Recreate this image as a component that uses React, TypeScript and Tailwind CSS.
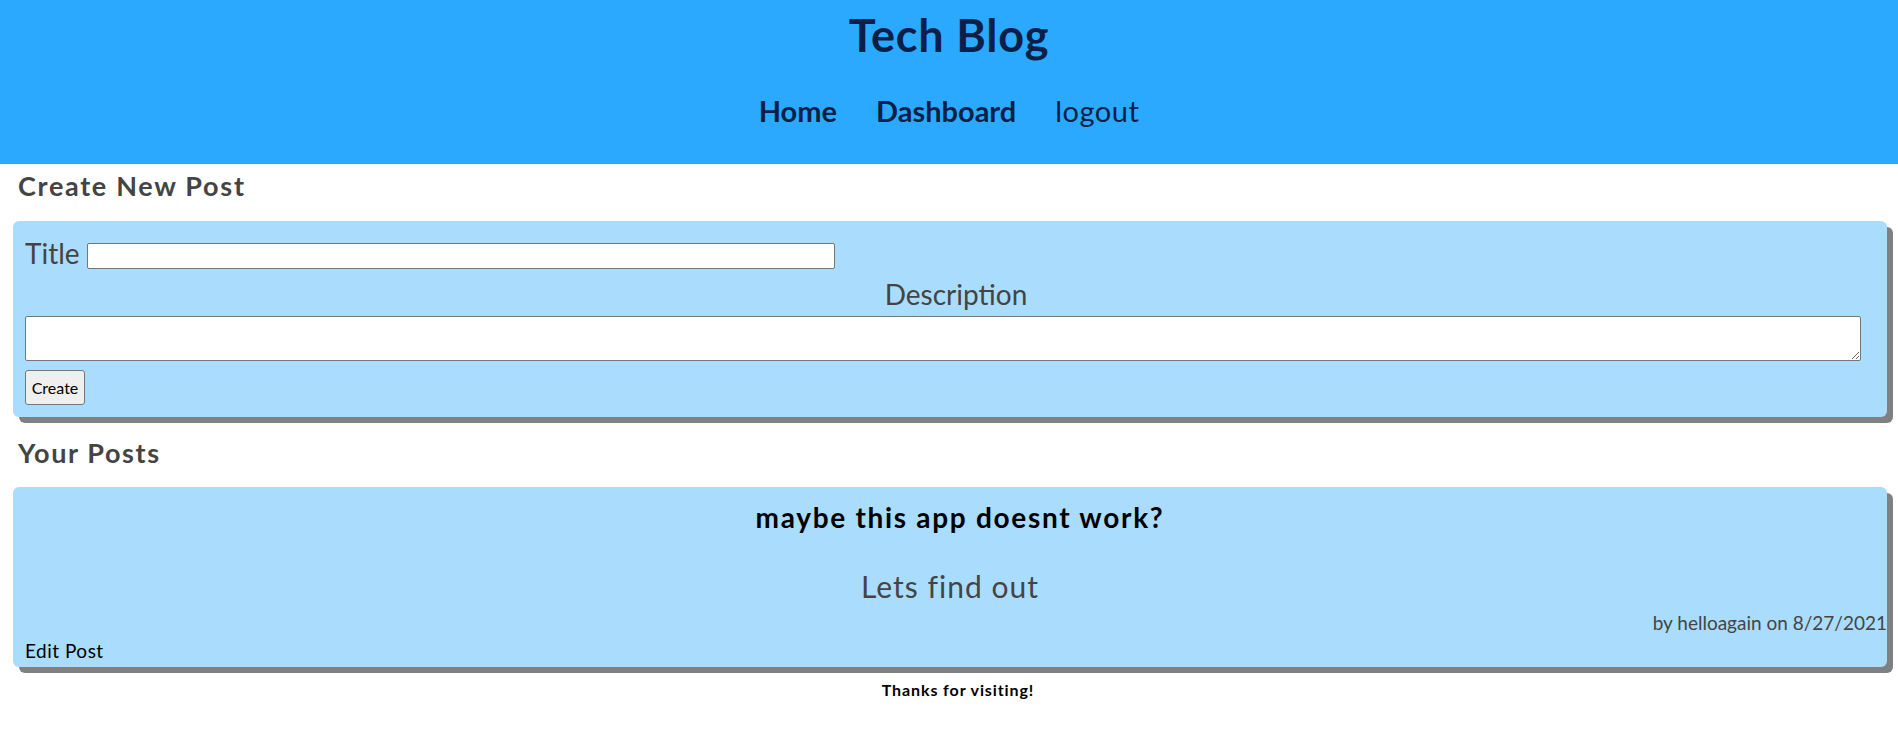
import React from "react";

export default function App() {
  return (
    <div className="min-h-[742px] bg-white font-['Lato','Noto_Sans',sans-serif] text-[#444444]">
      <header className="h-[164px] bg-[#2aa9ff] pt-[5px] flex flex-col items-center text-[#0b1f47]">
        <h1 className="h-[60px] text-[45px] leading-[60px] font-bold tracking-[0.8px]">Tech Blog</h1>
        <nav className="mt-[26px] flex gap-[39px] text-[29px] leading-[40px]">
          <a className="font-bold">Home</a>
          <a className="font-bold">Dashboard</a>
          <a className="font-normal tracking-[0.5px]">logout</a>
        </nav>
      </header>

      <main className="pl-[13px] pr-[11px]">
        <h2 className="pt-[4px] mb-[17px] pl-[5px] text-[27px] leading-[36px] font-bold tracking-[1.7px]">
          Create New Post
        </h2>

        <form className="rounded-md bg-[#aadcfe] pl-[12px] pt-[15px] pb-[12px] shadow-[6px_6px_0_#808080]">
          <div className="flex items-start">
            <label className="text-[28px] leading-[34px]">Title</label>
            <input
              type="text"
              className="ml-[7px] mt-[7px] h-[26px] w-[748px] rounded-[2px] border border-[#767676] bg-white"
            />
          </div>
          <div className="mt-[7px] text-center text-[28px] leading-[34px]">Description</div>
          <textarea className="mt-[5px] block h-[45px] w-[1836px] rounded-[2px] border border-[#767676] bg-white" />
          <button
            type="button"
            className="mt-[9px] block h-[35px] w-[60px] rounded-[3px] border border-[#767676] bg-[#efefef] text-[16px] text-black"
          >
            Create
          </button>
        </form>

        <h2 className="pt-[18px] mb-[16px] pl-[5px] text-[27px] leading-[36px] font-bold tracking-[1.6px]">
          Your Posts
        </h2>

        <section className="rounded-md bg-[#aadcfe] pl-[12px] pt-[14px] pb-[4px] shadow-[6px_6px_0_#808080]">
          <h3 className="pl-[8px] text-center text-[28px] leading-[32px] font-bold tracking-[1.7px] text-black">
            maybe this app doesnt work?
          </h3>
          <p className="mt-[36px] pr-[12px] text-center text-[30px] leading-[34px] tracking-[1px]">Lets find out</p>
          <p className="mt-[8px] text-right text-[19px] leading-[24px]">by helloagain on 8/27/2021</p>
          <a className="mt-[4px] block text-[19px] leading-[24px] tracking-[0.5px] text-black">Edit Post</a>
        </section>

        <footer className="mt-[13px] pl-[16px] text-center text-[16px] leading-[20px] font-bold tracking-[0.9px] text-black">
          Thanks for visiting!
        </footer>
      </main>
    </div>
  );
}
